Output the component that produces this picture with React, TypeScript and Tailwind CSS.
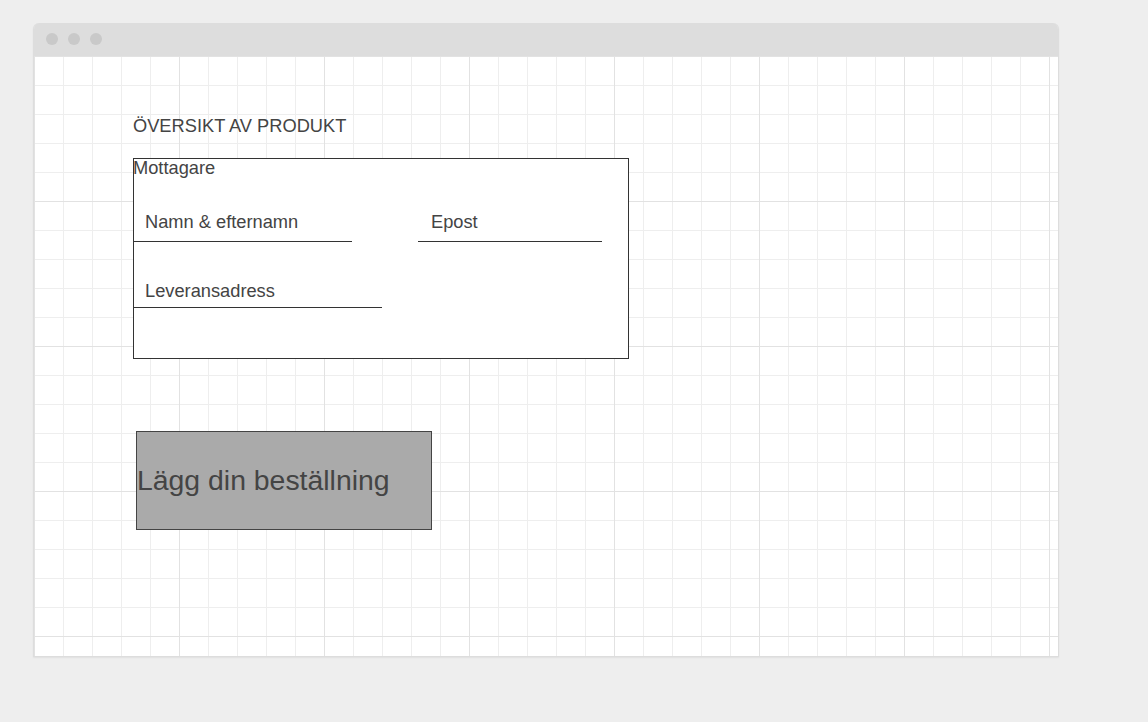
export default function App() {
  return (
    <div className="w-full h-[722px] bg-[#eeeeee] overflow-hidden pt-[23px] pl-[33px]" style={{ fontFamily: '"Liberation Sans", Arial, sans-serif' }}>
      <div className="w-[1026px] border-x border-b border-[#dddddd] rounded-t-[6px] overflow-hidden shadow-[0_1px_2px_rgba(0,0,0,0.06)]">
        <div className="h-[33px] bg-[#dddddd] flex items-center gap-[10px] pl-[12px] pb-[1px]">
          <span className="w-[12px] h-[12px] rounded-full bg-[#c9c9c9]" />
          <span className="w-[12px] h-[12px] rounded-full bg-[#c9c9c9]" />
          <span className="w-[12px] h-[12px] rounded-full bg-[#c9c9c9]" />
        </div>
        <div className="h-[600px] bg-white bg-[linear-gradient(to_right,#e2e2e2_1px,transparent_1px),linear-gradient(to_bottom,#e2e2e2_1px,transparent_1px),linear-gradient(to_right,#eeeeee_1px,transparent_1px),linear-gradient(to_bottom,#eeeeee_1px,transparent_1px)] bg-[size:145px_145px,145px_145px,29px_29px,29px_29px] pl-[99px] pt-[59px] text-[#444444]">
          <div className="text-[18.25px] leading-[21px]">ÖVERSIKT AV PRODUKT</div>
          <div className="mt-[22px] w-[496px] h-[201px] border border-[#333333] bg-white">
            <div className="-ml-[1px] -mt-[2px] text-[18.25px] leading-[21px]">Mottagare</div>
            <div className="flex mt-[33px]">
              <div className="w-[218px] border-b border-[#333333] pl-[11px] pb-[9px] text-[18.25px] leading-[21px]">Namn &amp; efternamn</div>
              <div className="ml-[66px] w-[184px] border-b border-[#333333] pl-[13px] pb-[9px] text-[18.25px] leading-[21px]">Epost</div>
            </div>
            <div className="mt-[38px] w-[248px] border-b border-[#333333] pl-[11px] pb-[6px] text-[18.25px] leading-[21px]">Leveransadress</div>
          </div>
          <div className="mt-[72px] ml-[3px] w-[296px] h-[99px] bg-[#aaaaaa] border border-[#444444] flex items-center pb-[2px] text-[28.4px] leading-[32px] text-[#444444]">
            Lägg din beställning
          </div>
        </div>
      </div>
    </div>
  );
}
